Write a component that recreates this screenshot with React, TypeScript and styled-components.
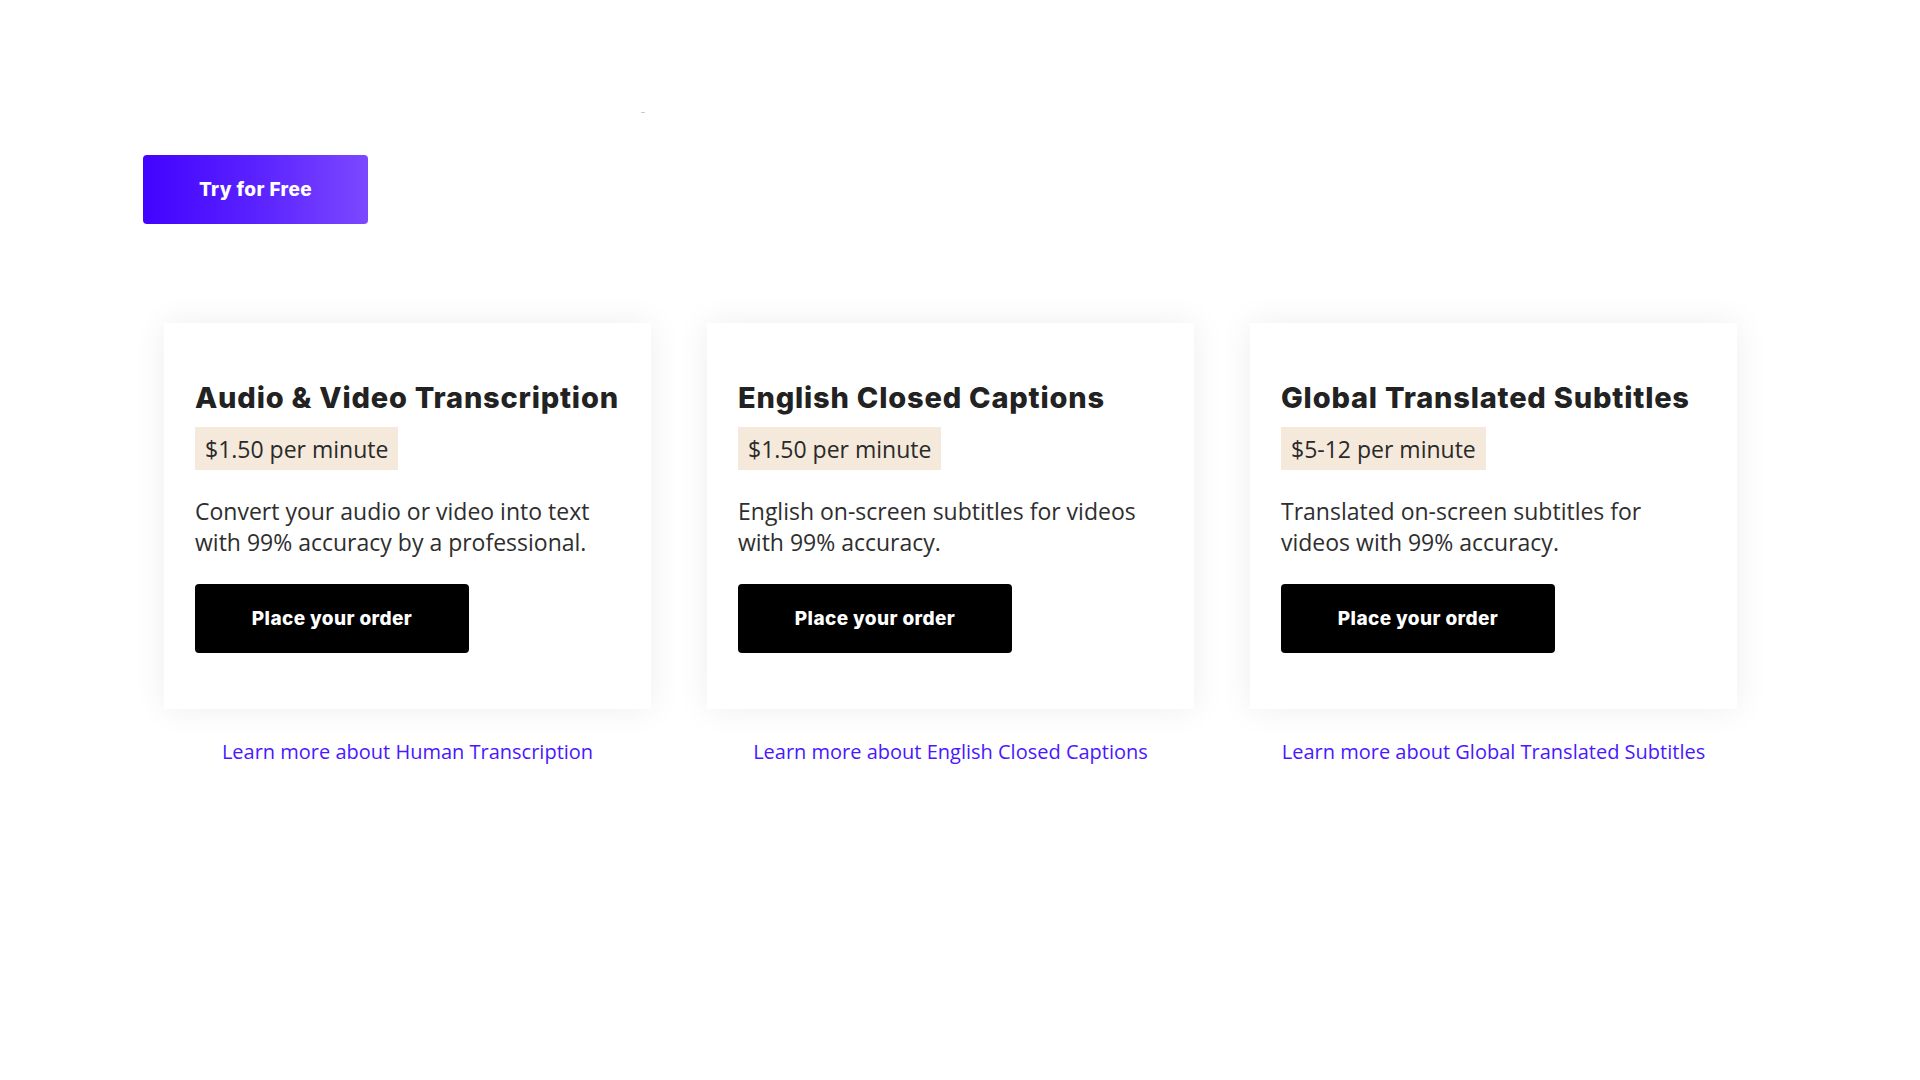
import React from "react";
import styled, { createGlobalStyle } from "styled-components";

const GlobalStyle = createGlobalStyle`
  html, body {
    margin: 0;
    padding: 0;
    background: #ffffff;
  }
  body {
    font-family: "Open Sans", "Liberation Sans", sans-serif;
    -webkit-font-smoothing: antialiased;
  }
  * { box-sizing: border-box; }
`;

const Page = styled.main`
  width: 1920px;
  min-height: 1080px;
  padding: 155px 0 0 143px;
  position: relative;
`;

const Speck = styled.span`
  position: absolute;
  left: 641px;
  top: 112px;
  width: 4px;
  height: 1px;
  background: #c9c9d3;
`;

const TryButton = styled.a`
  display: flex;
  align-items: center;
  justify-content: center;
  width: 225px;
  height: 69px;
  border-radius: 4px;
  background: linear-gradient(90deg, #4203ff 0%, #5a22ff 50%, #7c48ff 100%);
  color: #ffffff;
  font-family: "Inter", "Lato", sans-serif;
  font-weight: 800;
  font-size: 19px;
  letter-spacing: 0.4px;
  text-decoration: none;
`;

const Columns = styled.section`
  display: grid;
  grid-template-columns: repeat(3, 487px);
  column-gap: 56px;
  margin: 99px 0 0 21px;
`;

const Column = styled.div`
  display: flex;
  flex-direction: column;
  align-items: stretch;
`;

const Card = styled.article`
  background: #ffffff;
  height: 386px;
  padding: 56px 10px 0 31px;
  box-shadow: 0 0 32px rgba(0, 0, 0, 0.07);
  display: flex;
  flex-direction: column;
  align-items: flex-start;
`;

const Title = styled.h2`
  margin: 0;
  font-family: "Inter", "Lato", sans-serif;
  font-weight: 800;
  font-size: 29px;
  line-height: 38px;
  letter-spacing: 0.8px;
  color: #222222;
  white-space: nowrap;
`;

const Price = styled.div`
  margin-top: 10px;
  height: 43px;
  display: flex;
  align-items: center;
  padding: 0 10px;
  background: #f4e9db;
  color: #2a2a2a;
  font-size: 23px;
`;

const Description = styled.p`
  margin: 26px 0 0;
  font-size: 23px;
  line-height: 31px;
  color: #2e2e2e;
`;

const OrderButton = styled.a`
  margin-top: 26px;
  width: 274px;
  height: 69px;
  border-radius: 4px;
  background: #000000;
  color: #ffffff;
  display: flex;
  align-items: center;
  justify-content: center;
  font-family: "Inter", "Lato", sans-serif;
  font-weight: 800;
  font-size: 19px;
  letter-spacing: 0.4px;
  text-decoration: none;
`;

const LearnLink = styled.a`
  margin-top: 29px;
  text-align: center;
  font-size: 20px;
  line-height: 27px;
  color: #4a17ff;
  text-decoration: none;
`;

const offers = [
  {
    title: "Audio & Video Transcription",
    price: "$1.50 per minute",
    text: ["Convert your audio or video into text", "with 99% accuracy by a professional."],
    link: "Learn more about Human Transcription",
  },
  {
    title: "English Closed Captions",
    price: "$1.50 per minute",
    text: ["English on-screen subtitles for videos", "with 99% accuracy."],
    link: "Learn more about English Closed Captions",
  },
  {
    title: "Global Translated Subtitles",
    price: "$5-12 per minute",
    text: ["Translated on-screen subtitles for", "videos with 99% accuracy."],
    link: "Learn more about Global Translated Subtitles",
  },
];

export default function App() {
  return (
    <>
      <GlobalStyle />
      <Page>
        <Speck />
        <TryButton href="#">Try for Free</TryButton>
        <Columns>
          {offers.map((o) => (
            <Column key={o.title}>
              <Card>
                <Title>{o.title}</Title>
                <Price>{o.price}</Price>
                <Description>
                  {o.text[0]}
                  <br />
                  {o.text[1]}
                </Description>
                <OrderButton href="#">Place your order</OrderButton>
              </Card>
              <LearnLink href="#">{o.link}</LearnLink>
            </Column>
          ))}
        </Columns>
      </Page>
    </>
  );
}
